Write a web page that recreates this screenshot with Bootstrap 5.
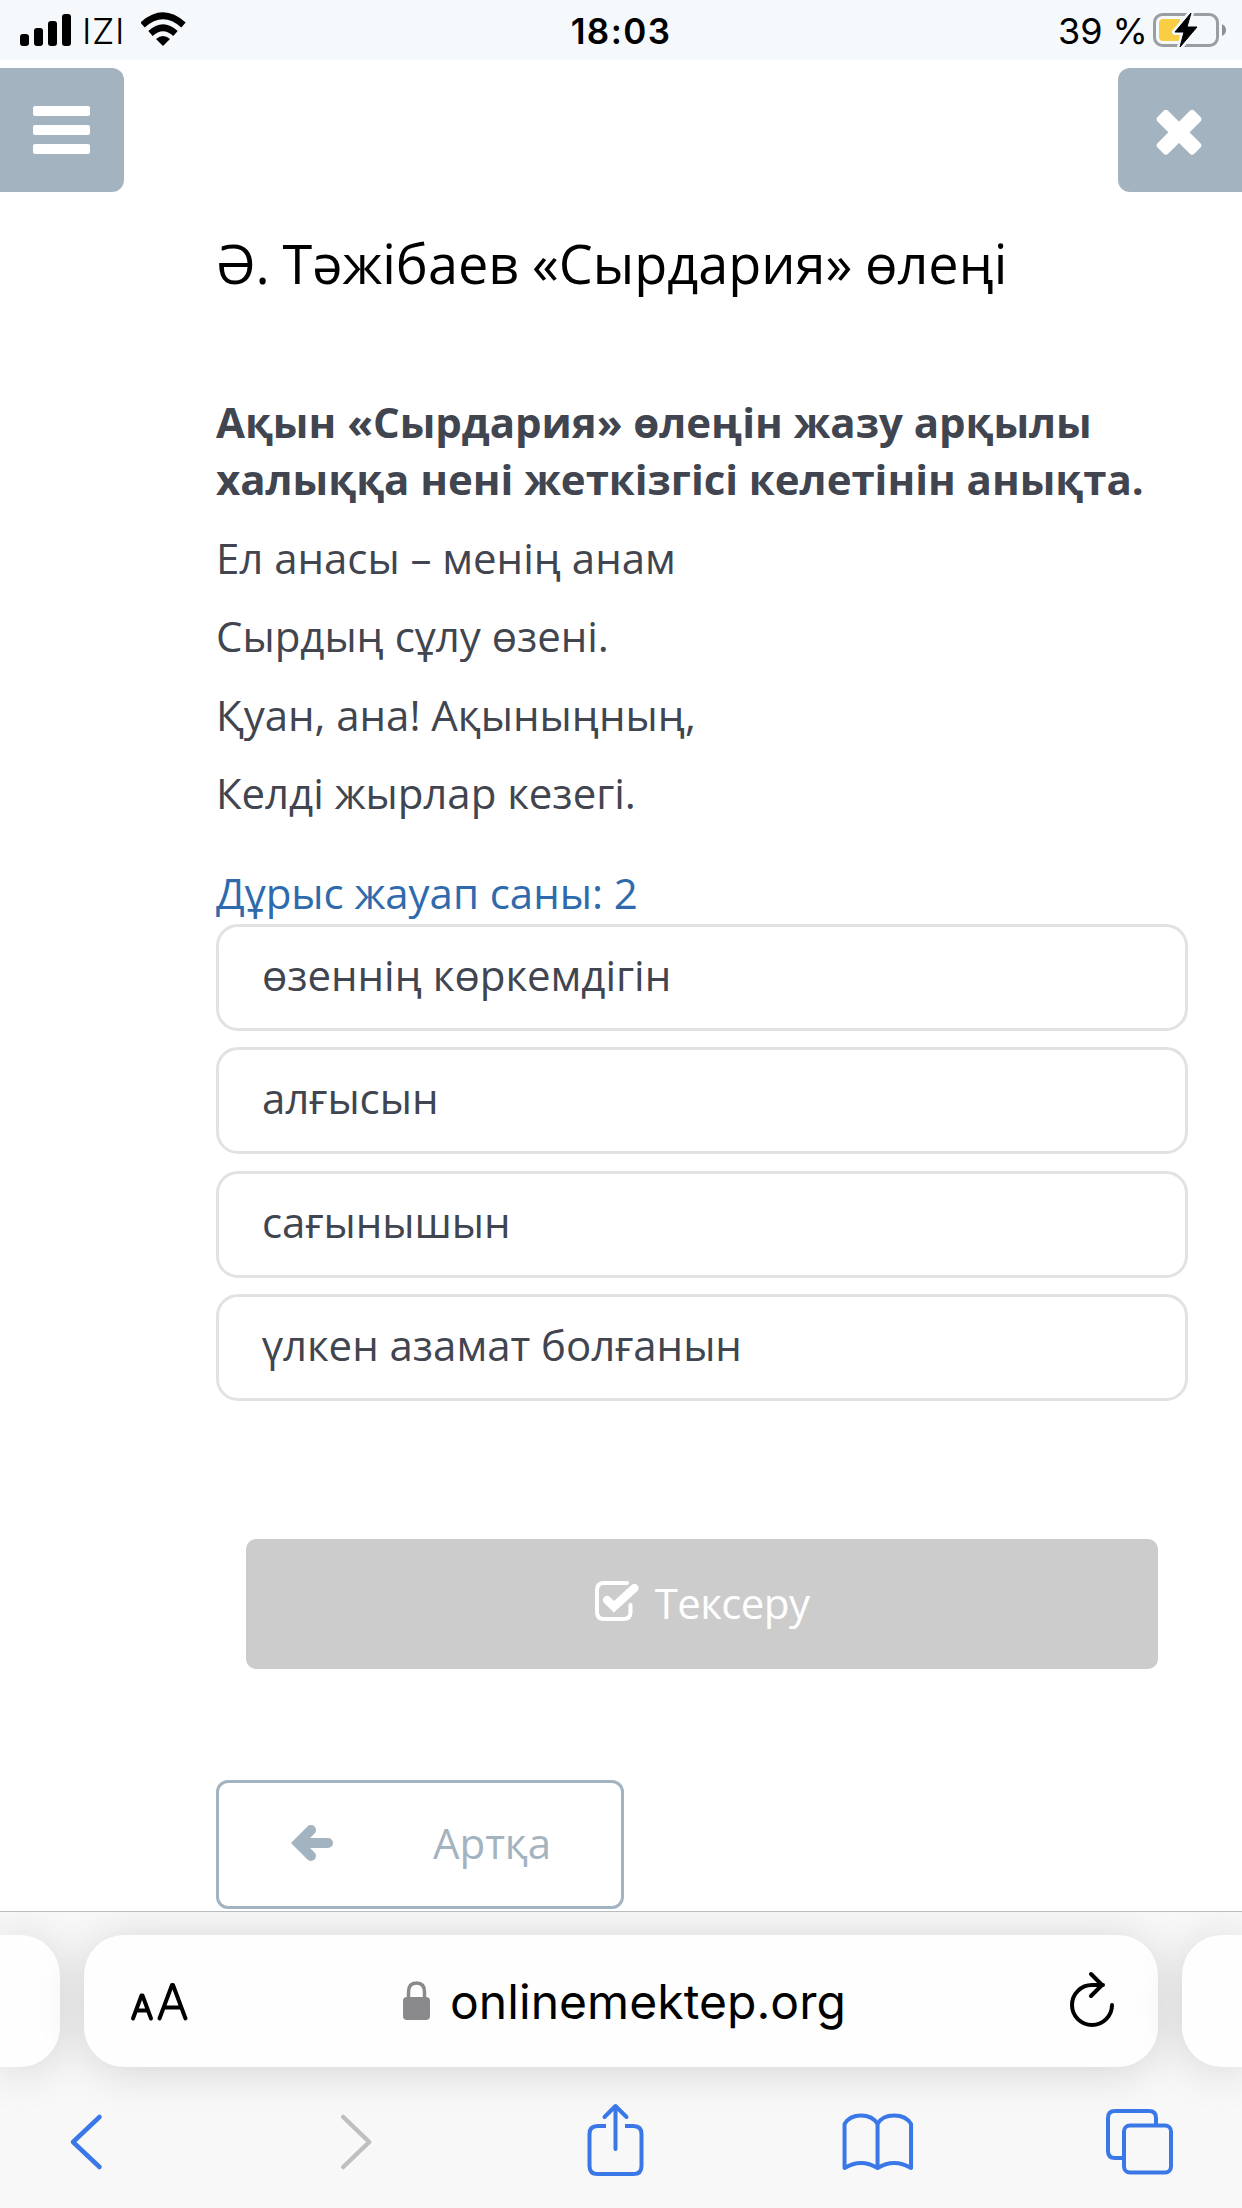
<!DOCTYPE html>
<html lang="kk">
<head>
<meta charset="utf-8">
<meta name="viewport" content="width=device-width, initial-scale=1">
<title>onlinemektep.org</title>
<link href="https://cdn.jsdelivr.net/npm/bootstrap@5.3.0/dist/css/bootstrap.min.css" rel="stylesheet">
<style>
  html, body { height: 100%; }
  body { font-family: "Open Sans", "Noto Sans", sans-serif; font-size: 42px; line-height: 57px; letter-spacing: -.04px; color: #41454f; background: #fff; overflow: hidden; }
  svg { display: block; flex-shrink: 0; }
  .screen { width: 1242px; height: 2208px; }
  .ios { font-family: Inter, sans-serif; color: #000; letter-spacing: 0; }
  .status-row { height: 60px; background: #f6f9fc; font-size: 36px; line-height: 60px; }
  .status-side { width: 400px; }
  .carrier { font-weight: 300; font-size: 36px; letter-spacing: .6px; margin-left: 10px; padding-top: 2px; }
  .clock { font-weight: 600; font-size: 35px; letter-spacing: 1.4px; padding-top: 1px; }
  .power { font-size: 36px; padding-top: 2px; margin-right: 2px; }
  .corner-btn { width: 124px; height: 124px; background: #a4b3c0; border: 0; padding: 0; border-radius: 12px; }
  .corner-btn.at-left { border-top-left-radius: 0; border-bottom-left-radius: 0; }
  .corner-btn.at-right { border-top-right-radius: 0; border-bottom-right-radius: 0; }
  .lesson { padding: 35px 54px 0 216px; min-height: 0; }
  .lesson-title { font-size: 54px; line-height: 72px; font-weight: 400; color: #000; margin: 0 0 94px; word-spacing: -1.2px; letter-spacing: -.02px; }
  .lesson p { margin-bottom: 21.4px; }
  .lesson p.fw-bold { margin-bottom: 22px; }
  .lesson .answers-note { color: #2f6bac; margin: 43px 0 2.4px; }
  .options { gap: 16.6px; }
  .option { border: 3px solid #e2e2e2; border-radius: 22px; height: 107px; padding: 19px 43px; color: inherit; background: #fff; }
  .check-btn { height: 130px; margin: 137.6px 30px 0; background: #ccc; color: #fff; border-radius: 10px; }
  .check-btn span { letter-spacing: -.6px; margin-left: 14px; padding-bottom: 2px; }
  .back-btn { width: 408px; height: 129px; margin-top: 111px; border: 3px solid #a4b3c0; border-radius: 12px; color: #a4b3c0; padding: 0 70px 3px 72px; }
  .browser-bar { height: 297px; border-top: 1px solid #b7bcc0; background: #f8f8f9; overflow: hidden; }
  .tabs-row { height: 132px; margin-top: 23px; gap: 24px; }
  .pill { background: #fefefe; border-radius: 40px; box-shadow: 0 4px 46px rgba(0,0,0,.15); flex-shrink: 0; }
  .pill-edge { width: 60px; }
  .pill-edge.at-left { border-radius: 0 40px 40px 0; }
  .pill-edge.at-right { border-radius: 40px 0 0 40px; }
  .address { width: 1074px; padding: 0 39px 0 46px; }
  .site { margin-left: 213px; }
  .host { font-size: 48px; line-height: 60px; margin-left: 20px; padding-top: 2px; letter-spacing: .06px; }
  .tools { padding: 33px 65px 0 48px; height: 118px; }
</style>
</head>
<body>
<div class="screen d-flex flex-column">
  <header>
    <div class="status-row ios d-flex justify-content-between">
      <div class="status-side d-flex align-items-center ps-3">
        <svg width="56" height="60" viewBox="16 0 56 60"><rect x="20" y="34" width="9" height="12" rx="3"/><rect x="34" y="28" width="9" height="18" rx="3"/><rect x="48" y="21" width="9" height="25" rx="3"/><rect x="62" y="14" width="9" height="32" rx="3"/></svg>
        <span class="carrier">IZI</span>
        <svg class="ms-3" width="46" height="60" viewBox="140 0 46 60"><path d="M162 46l-7-7q7-6 14 0z"/><g fill="none" stroke="#000" stroke-width="6.500"><path d="M149.500 33.500Q162 22 174.500 33.500"/><path d="M141.500 25Q162 6.500 182.500 25"/></g></svg>
      </div>
      <div class="clock">18:03</div>
      <div class="status-side d-flex align-items-center justify-content-end">
        <span class="power">39 %</span>
        <svg width="92" height="60" viewBox="1150 0 92 60"><rect x="1154.500" y="14.500" width="63" height="31" rx="8" fill="none" stroke="#9b9ea1" stroke-width="3"/><path d="M1222 24q4 2 4 6t-4 6z" fill="#8e9193"/><path d="M1163 19h17v22h-17q-4 0-4-4V23q0-4 4-4z" fill="#f9ce45"/><path d="M1191 13l-16 19h9l-4 15 17-20h-10z" stroke="#f6f9fc" stroke-width="6" stroke-linejoin="round"/><path d="M1191 13l-16 19h9l-4 15 17-20h-10z" stroke="#000" stroke-linejoin="round"/></svg>
      </div>
    </div>
    <div class="d-flex justify-content-between mt-2">
      <button class="corner-btn at-left"><svg width="124" height="124" fill="#fff"><rect x="33" y="38" width="57" height="10" rx="2"/><rect x="33" y="57" width="57" height="10" rx="2"/><rect x="33" y="76" width="57" height="10" rx="2"/></svg></button>
      <button class="corner-btn at-right"><svg width="124" height="124" fill="#fff"><g transform="translate(61 64.300)"><rect x="-26" y="-7.500" width="52" height="15" rx="3.500" transform="rotate(45)"/><rect x="-26" y="-7.500" width="52" height="15" rx="3.500" transform="rotate(-45)"/></g></svg></button>
    </div>
  </header>

  <main class="lesson flex-grow-1">
    <h1 class="lesson-title">Ә. Тәжібаев «Сырдария» өлеңі</h1>
    <p class="fw-bold">Ақын «Сырдария» өлеңін жазу арқылы<br>халыққа нені жеткізгісі келетінін анықта.</p>
    <p>Ел анасы – менің анам</p>
    <p>Сырдың сұлу өзені.</p>
    <p>Қуан, ана! Ақыныңның,</p>
    <p>Келді жырлар кезегі.</p>
    <div class="answers-note">Дұрыс жауап саны: 2</div>
    <div class="options d-flex flex-column">
      <div class="option">өзеннің көркемдігін</div>
      <div class="option">алғысын</div>
      <div class="option">сағынышын</div>
      <div class="option">үлкен азамат болғанын</div>
    </div>
    <div class="check-btn d-flex align-items-center justify-content-center">
      <svg width="46" height="48" viewBox="0 0 46 48" fill="none" stroke="#fff" stroke-linecap="round"><path d="M32 3H9Q2 3 2 10v22q0 7 7 7h19.500q7 0 7-7V25" stroke-width="4"/><path d="M11.500 19.500l7.500 7.500L40 7.500" stroke-width="8" stroke-linecap="butt"/><path d="M12 20l7 6.500L39.500 8" stroke-width="8"/></svg>
      <span>Тексеру</span>
    </div>
    <div class="back-btn d-flex align-items-center">
      <svg width="44" height="40" viewBox="0 0 44 40"><path d="M20 7L7 20l13 13M8 20h29" fill="none" stroke="#a4b3c0" stroke-width="10" stroke-linecap="round"/></svg>
      <span class="ms-auto">Артқа</span>
    </div>
  </main>

  <footer class="browser-bar ios flex-shrink-0">
    <div class="tabs-row d-flex">
      <div class="pill pill-edge at-left"></div>
      <div class="pill address d-flex align-items-center">
        <svg width="60" height="60" viewBox="0 0 60 60" fill="none" stroke="#000" stroke-width="4" stroke-linecap="round" stroke-linejoin="round"><path d="M3 47.500l8.500-23h1L21 47.500M6 39.500h12M29.500 47.500L42 14h1L55.500 47.500M34 36.500h17"/></svg>
        <div class="site d-flex align-items-center">
          <svg width="27" height="40" viewBox="0 0 27 40"><rect y="16" width="27" height="23" rx="4" fill="#8a8a8d"/><path d="M5.500 18V11Q5.500 2 13.500 2t8 9v7" fill="none" stroke="#8a8a8d" stroke-width="3.500"/></svg>
          <span class="host">onlinemektep.org</span>
        </div>
        <svg class="ms-auto" width="50" height="60" viewBox="0 1 50 60" fill="none" stroke="#000" stroke-width="4" stroke-linecap="round" stroke-linejoin="round"><path d="M43 35A20 20 0 1 1 23 15h11M22 4l11 11-11 11"/></svg>
      </div>
      <div class="pill pill-edge at-right"></div>
    </div>
    <div class="tools d-flex justify-content-between">
      <svg width="76" height="84" viewBox="48 2100 76 84" fill="none" stroke="#3a78e8" stroke-width="4.500" stroke-linecap="round" stroke-linejoin="round"><path d="M99.500 2117L73 2142l26.500 25"/></svg>
      <svg width="76" height="84" viewBox="311.250 2100 76 84" fill="none" stroke="#bfbfc0" stroke-width="4.500" stroke-linecap="round" stroke-linejoin="round"><path d="M343.500 2117l26 25-26 25"/></svg>
      <svg width="76" height="84" viewBox="574.500 2100 76 84" fill="none" stroke="#3a78e8" stroke-width="4" stroke-linejoin="round"><path d="M605.500 2126H597q-8 0-8 8v32q0 8 8 8h36q8 0 8-8v-32q0-8-8-8h-8.500"/><path d="M615 2149v-43M604 2117l11-11 11 11" stroke-linecap="round"/></svg>
      <svg width="76" height="84" viewBox="837.750 2100 76 84" fill="none" stroke="#3a78e8" stroke-width="4" stroke-linejoin="round"><path d="M877.300 2124q-5-8.500-16.500-8.500t-16.500 8.500v44q16.500-10 33 0 16.500-10 33.500 0v-44q-5-8.500-17-8.500t-16.500 8.500v44"/></svg>
      <svg width="76" height="84" viewBox="1101 2100 76 84" fill="none" stroke="#3a78e8" stroke-width="4"><path d="M1123 2158h-8q-7 0-7-7v-33q0-7 7-7h34q7 0 7 7v7"/><rect x="1124" y="2125.500" width="47" height="47" rx="6"/></svg>
    </div>
  </footer>
</div>
<script src="https://cdn.jsdelivr.net/npm/bootstrap@5.3.0/dist/js/bootstrap.bundle.min.js"></script>
</body>
</html>
